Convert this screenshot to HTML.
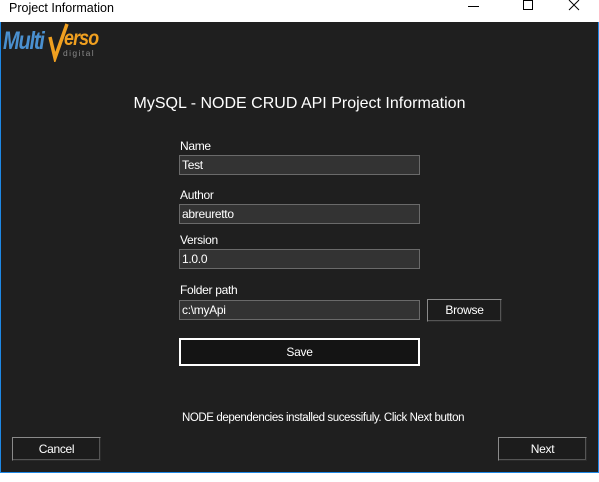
<!DOCTYPE html>
<html><head><meta charset="utf-8"><style>
*{margin:0;padding:0;box-sizing:border-box}
body{width:599px;height:482px;background:#fff;position:relative;overflow:hidden;font-family:"Liberation Sans",Arial,sans-serif;font-size:12px;color:#fff}
.a{position:absolute}
#win{left:0;top:22px;width:599px;height:451px;background:#1f1f1f;border:1px solid #1e88e5;border-top:none}
.title{left:9px;top:0;color:#000;font-size:12.5px;line-height:16px}
.lbl{position:absolute;left:180px;font-size:12px;color:#fff;letter-spacing:-0.3px}
.inp{position:absolute;left:179px;width:241px;height:20px;background:#333;border:1px solid #6a6a6a;padding-left:2px;font-size:12px;line-height:18px;color:#fff;letter-spacing:-0.3px}
.btn{position:absolute;background:#1c1c1c;border:1px solid #8a8a8a;border-right-color:#2a2a2a;border-bottom-color:#2a2a2a;box-shadow:inset -1px -1px 0 #555;text-align:center;font-size:12px;color:#fff;letter-spacing:-0.3px}
</style></head><body>
<div class="a title">Project Information</div>
<svg class="a" style="left:468px;top:0" width="130" height="14">
<line x1="0" y1="6.5" x2="11" y2="6.5" stroke="#000"/>
<rect x="55.5" y="0.5" width="9" height="9" fill="none" stroke="#000"/>
<path d="M101 0L111 10M111 0L101 10" stroke="#000"/>
</svg>
<div id="win" class="a">
<div class="a" style="left:2px;top:5px;font:italic bold 25px 'Liberation Sans',sans-serif;color:#4a90d0;letter-spacing:-1.5px;transform:scaleX(0.8);transform-origin:left">Multi</div>
<svg class="a" style="left:46px;top:0" width="24" height="40"><path d="M3 15L8 36L20 2" stroke="#f0a020" stroke-width="3.5" fill="none"/></svg>
<div class="a" style="left:63px;top:5px;font:italic bold 21px 'Liberation Sans',sans-serif;color:#f0a020;letter-spacing:-1px;transform:scaleX(0.85);transform-origin:left">erso</div>
<div class="a" style="left:62px;top:26px;font-size:8.5px;color:#888;letter-spacing:1.4px">digital</div>
<div class="a" style="left:0;width:597px;top:73px;text-align:center;font-size:16px;color:#fff">MySQL - NODE CRUD API Project Information</div>
</div>
<div class="lbl" style="top:139px">Name</div>
<div class="inp" style="top:155px">Test</div>
<div class="lbl" style="top:188px">Author</div>
<div class="inp" style="top:204px">abreuretto</div>
<div class="lbl" style="top:233px">Version</div>
<div class="inp" style="top:249px">1.0.0</div>
<div class="lbl" style="top:283px">Folder path</div>
<div class="inp" style="top:300px">c:\myApi</div>
<div class="btn" style="left:427px;top:299px;width:75px;height:23px;line-height:21px">Browse</div>
<div class="btn" style="left:179px;top:338px;width:241px;height:28px;line-height:24px;border:2px solid #fff;box-shadow:none;background:#141414">Save</div>
<div class="a" style="left:0;width:646px;top:412px;text-align:center;font-size:11.5px;letter-spacing:-0.4px">NODE dependencies installed sucessifuly. Click Next button</div>
<div class="btn" style="left:12px;top:437px;width:89px;height:24px;line-height:22px">Cancel</div>
<div class="btn" style="left:498px;top:437px;width:89px;height:24px;line-height:22px">Next</div>
</body></html>
